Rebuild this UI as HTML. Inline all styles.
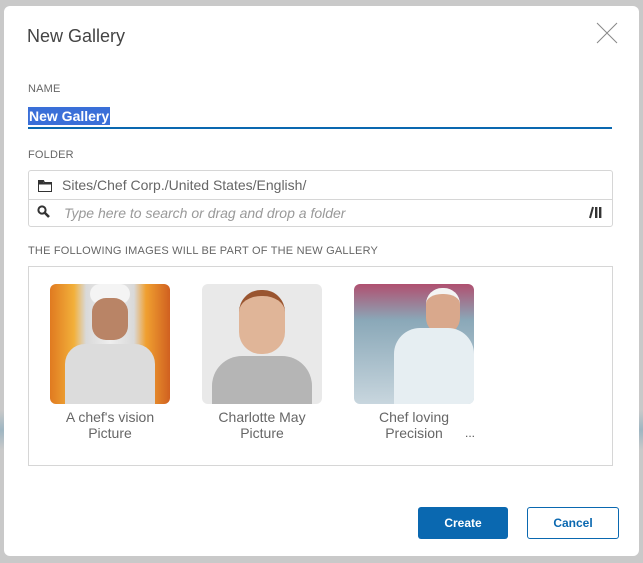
<!DOCTYPE html>
<html><head><meta charset="utf-8"><style>
html,body{margin:0;padding:0}
body{width:643px;height:563px;background:#c9c9c9;position:relative;overflow:hidden;font-family:"Liberation Sans",sans-serif}
.bgband{position:absolute;left:0;top:410px;width:643px;height:40px;background:linear-gradient(#c9c9c9,#9fb6c2,#c9c9c9)}
.dlg{position:absolute;left:4px;top:6px;width:635px;height:550px;background:#fff;border-radius:6px}
.abs{position:absolute}
.lbl{font-size:11px;color:#666;letter-spacing:.2px}
.img{position:absolute;top:284px;width:120px;height:120px;border-radius:6px;overflow:hidden}
.cap{position:absolute;top:409px;width:120px;text-align:center;font-size:14px;color:#666;line-height:16px}
</style></head><body>
<div class="bgband"></div>
<div class="dlg"></div>
<div class="abs" style="left:27px;top:26px;font-size:18px;color:#444">New Gallery</div>
<svg class="abs" style="left:596px;top:22px" width="22" height="22"><path d="M1 1L21 21M21 1L1 21" stroke="#888" stroke-width="1"/></svg>
<div class="abs lbl" style="left:28px;top:83px">NAME</div>
<div class="abs" style="left:28px;top:107px;height:18px;background:#3a6fd8;color:#fff;font-size:14px;font-weight:bold;line-height:18px;padding:0 1px">New Gallery</div>
<div class="abs" style="left:28px;top:127px;width:584px;height:2px;background:#0a68b0"></div>
<div class="abs lbl" style="left:28px;top:149px">FOLDER</div>
<div class="abs" style="left:28px;top:170px;width:583px;height:55px;border:1px solid #d6d6d6;border-radius:3px"></div>
<div class="abs" style="left:29px;top:199px;width:583px;height:1px;background:#d6d6d6"></div>
<svg class="abs" style="left:38px;top:180px" width="14" height="12"><path d="M0.5 0.5h5l1 2h7v9h-13z" fill="none" stroke="#333"/><rect x="0.5" y="0.5" width="5" height="2" fill="#333"/><rect x="0.5" y="2.5" width="13" height="2" fill="#333"/></svg>
<div class="abs" style="left:62px;top:177px;font-size:14px;color:#666">Sites/Chef Corp./United States/English/</div>
<svg class="abs" style="left:37px;top:205px" width="14" height="14"><circle cx="5" cy="5" r="3.6" fill="none" stroke="#333" stroke-width="2"/><path d="M7.5 7.5L12 12" stroke="#333" stroke-width="2.6"/></svg>
<div class="abs" style="left:64px;top:205px;font-size:14px;color:#999;font-style:italic">Type here to search or drag and drop a folder</div>
<svg class="abs" style="left:589px;top:206px" width="14" height="13"><path d="M1 12L4 1" stroke="#333" stroke-width="2"/><rect x="6" y="1" width="2.4" height="11" fill="#333"/><rect x="10" y="1" width="2.4" height="11" fill="#333"/></svg>
<div class="abs lbl" style="left:28px;top:245px">THE FOLLOWING IMAGES WILL BE PART OF THE NEW GALLERY</div>
<div class="abs" style="left:28px;top:266px;width:583px;height:198px;border:1px solid #d6d6d6"></div>
<div class="img" style="left:50px;background:linear-gradient(90deg,#e07a20,#f2b03a 20%,#d9d9d9 30%,#eee 50%,#d9d9d9 70%,#f0a030 80%,#d06020)">
 <div class="abs" style="left:40px;top:0;width:40px;height:20px;background:#f4f4f4;border-radius:10px"></div>
 <div class="abs" style="left:42px;top:14px;width:36px;height:42px;background:#b98466;border-radius:14px"></div>
 <div class="abs" style="left:15px;top:60px;width:90px;height:60px;background:#dcdcdc;border-radius:20px 20px 0 0"></div>
</div>
<div class="img" style="left:202px;background:#e9e9e9">
 <div class="abs" style="left:37px;top:6px;width:46px;height:58px;background:#e0b598;border-radius:22px;border-top:6px solid #9a5530"></div>
 <div class="abs" style="left:10px;top:72px;width:100px;height:48px;background:#b5b5b5;border-radius:30px 30px 0 0"></div>
</div>
<div class="img" style="left:354px;background:linear-gradient(#b05070,#8aa8b8 30%,#c8d6de)">
 <div class="abs" style="left:72px;top:4px;width:34px;height:40px;background:#d9a88c;border-radius:16px;border-top:6px solid #f4f4f4"></div>
 <div class="abs" style="left:40px;top:44px;width:80px;height:76px;background:#e6eef2;border-radius:26px 26px 0 0"></div>
</div>
<div class="cap" style="left:50px">A chef's vision<br>Picture</div>
<div class="cap" style="left:202px">Charlotte May<br>Picture</div>
<div class="cap" style="left:354px">Chef loving<br>Precision</div>
<div class="abs" style="left:465px;top:426px;font-size:12px;color:#555">...</div>
<div class="abs" style="left:418px;top:507px;width:90px;height:32px;background:#0a68b0;border-radius:3px;color:#fff;font-size:12px;font-weight:bold;text-align:center;line-height:32px">Create</div>
<div class="abs" style="left:527px;top:507px;width:90px;height:30px;border:1px solid #0a68b0;border-radius:3px;color:#0a68b0;font-size:12px;font-weight:bold;text-align:center;line-height:30px">Cancel</div>
</body></html>
